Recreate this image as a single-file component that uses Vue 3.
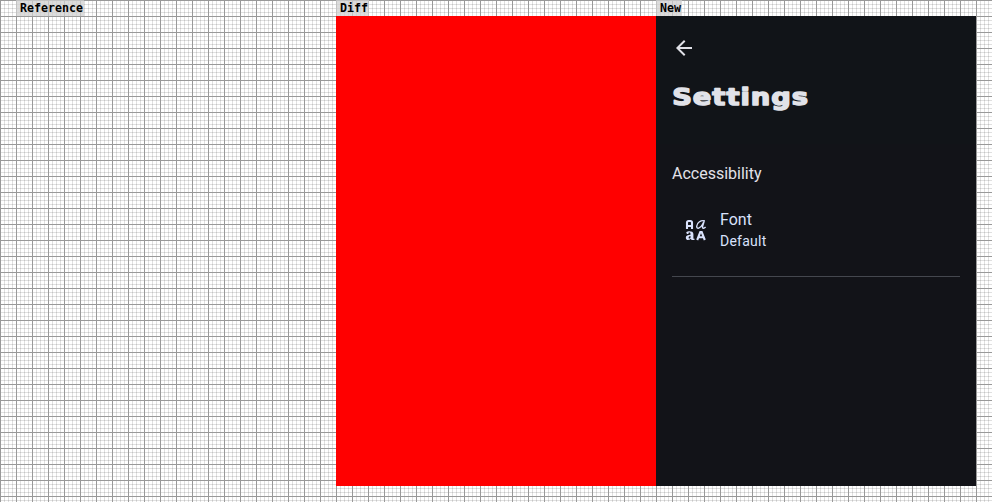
<script setup>
const panes = [
  { name: 'Reference', kind: 'blank' },
  { name: 'Diff', kind: 'diff' },
  { name: 'New', kind: 'screen' },
]
</script>

<template>
  <main class="sheet">
    <section v-for="pane in panes" :key="pane.name" class="pane">
      <div class="caption"><span class="tag">{{ pane.name }}</span></div>
      <div class="frame" :class="pane.kind">
        <template v-if="pane.kind === 'screen'">
          <header class="header">
            <svg class="back" viewBox="0 0 24 24" aria-label="Back">
              <path d="M20 11H7.83l5.59-5.59L12 4l-8 8 8 8 1.41-1.41L7.83 13H20z" />
            </svg>
            <h1 class="title">
              <svg class="title-art" width="144" height="36">
                <text x="0.2" y="24.2" textLength="136.8" lengthAdjust="spacingAndGlyphs">Settings</text>
              </svg>
            </h1>
          </header>
          <h2 class="group">Accessibility</h2>
          <div class="row">
            <svg class="fonticon" viewBox="0 0 24 24">
              <path class="line" d="M3 11V4.6Q3 3 4.6 3H6.4Q8 3 8 4.6V11M3 8H8" />
              <path class="curve" d="M20.9 2.9C17 1.8 12.9 4.5 12.7 8.2C12.6 11.6 16.3 10.7 18.6 6.2L20.2 3L18.6 8.4C18.1 10.7 20 10.8 21.6 9" />
              <path class="heavy-shape" d="M2.3 14.3C4 12.9 9.4 12.8 9.4 16V20.2Q9.4 21 10.6 20.8V21.7C9 22.4 7.1 22.2 6.7 20.8C5.3 22.6 1.8 22.4 1.8 19.7C1.8 17.5 4 16.9 6.5 16.8V15.8C6.5 14.2 5.2 14.2 4.6 14.7C5.1 16.4 2.2 16.8 2.3 14.3ZM6.5 17.9C4.2 18 4.2 20.6 5.4 20.6C6.1 20.6 6.5 20.1 6.5 19.6Z" />
              <path class="line" d="M13.2 22L16.3 14H17.7L20.8 22M14.4 19.2H19.6" />
            </svg>
            <div class="copy">
              <div class="name">Font</div>
              <div class="value">Default</div>
            </div>
          </div>
          <hr class="rule" />
        </template>
      </div>
    </section>
  </main>
</template>

<style>
body {
  margin: 0;
  background: #fff;
}
</style>

<style scoped>
.sheet {
  box-sizing: border-box;
  width: 992px;
  height: 502px;
  padding: 0 16px 16px;
  display: flex;
  overflow: hidden;
  background-color: #fff;
  background-image:
    linear-gradient(to right, #999 1px, transparent 1px),
    linear-gradient(to bottom, #999 1px, transparent 1px),
    linear-gradient(to right, rgba(0, 0, 0, 0.12) 1px, transparent 1px),
    linear-gradient(to bottom, rgba(0, 0, 0, 0.12) 1px, transparent 1px);
  background-size: 16px 16px, 16px 16px, 4px 4px, 4px 4px;
}
.pane {
  width: 320px;
  display: flex;
  flex-direction: column;
}
.caption {
  height: 16px;
  display: flex;
}
.tag {
  box-sizing: border-box;
  height: 16px;
  padding: 0 1px 0 4px;
  background: rgba(208, 208, 208, 0.75);
  color: #000;
  font: bold 11.63px/16px "DejaVu Sans Mono", monospace;
}
.frame {
  height: 470px;
}
.diff {
  background: #f00;
}
.screen {
  box-sizing: border-box;
  padding: 0 16px;
  background: linear-gradient(#111418 128px, #121318 128px);
  font-family: Roboto, sans-serif;
}
.header {
  height: 128px;
  padding-top: 20px;
  box-sizing: border-box;
}
.back {
  display: block;
  width: 24px;
  height: 24px;
  fill: #e1e2e8;
}
.title {
  margin: 21px 0 0;
  height: 36px;
}
.title-art {
  display: block;
}
.title-art text {
  font: bold 22.5px "DejaVu Sans", sans-serif;
  letter-spacing: 0.8px;
  fill: #e1e2e8;
  stroke: #e1e2e8;
  stroke-width: 1.4px;
  stroke-linejoin: round;
}
.group {
  margin: 18px 0 0;
  font-size: 16px;
  line-height: 24px;
  font-weight: 400;
  color: #e2e2e9;
}
.row {
  height: 44px;
  margin-top: 22px;
  padding-left: 12px;
  display: flex;
  align-items: center;
  gap: 12px;
  color: #d9e2fc;
}
.fonticon {
  width: 24px;
  height: 24px;
}
.line {
  fill: none;
  stroke: #d9e2fc;
  stroke-width: 2.1;
}
.curve {
  fill: none;
  stroke: #d9e2fc;
  stroke-width: 1.4;
}
.heavy-shape {
  fill: #d9e2fc;
  fill-rule: evenodd;
}
.copy {
  padding-bottom: 2px;
}
.name {
  font-size: 16px;
  line-height: 23px;
}
.value {
  font-size: 14px;
  line-height: 20px;
  letter-spacing: 0.25px;
}
.rule {
  height: 1px;
  margin: 24px 0 0;
  border: 0;
  background: #44474e;
}
</style>
